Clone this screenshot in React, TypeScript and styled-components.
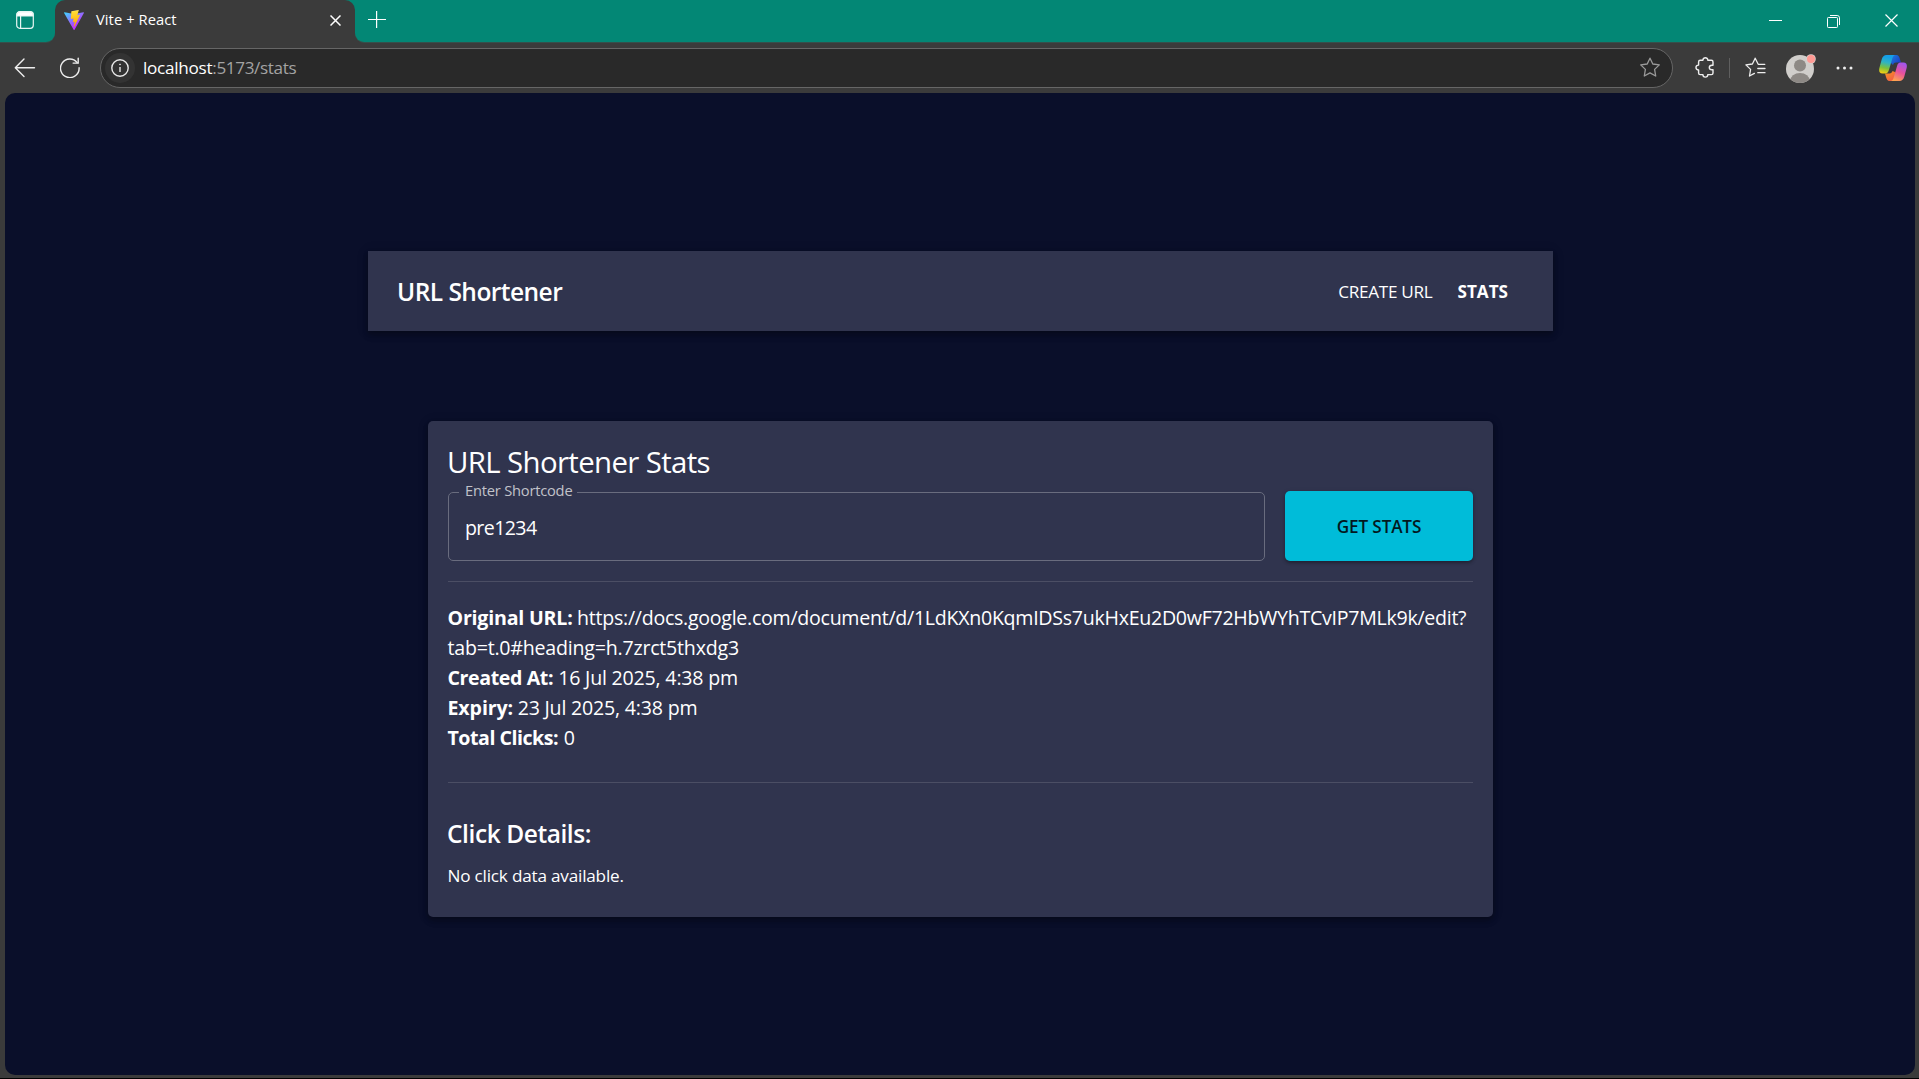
import React from 'react';
import styled, { createGlobalStyle } from 'styled-components';

const GlobalStyle = createGlobalStyle`
  * { box-sizing: border-box; }
  html, body { margin: 0; padding: 0; background: #000; }
  body {
    font-family: "Open Sans", "Noto Sans", sans-serif;
    color: #fff;
    overflow: hidden;
  }
  svg { display: block; flex: none; }
`;

/* ---------- browser frame ---------- */

const Window = styled.div`
  width: 1919px;
  height: 1079px;
  display: flex;
  flex-direction: column;
  background: #3b3b3b;
  border-bottom: 1px solid #000;
`;

const TabStrip = styled.div`
  display: flex;
  height: 42px;
  flex: none;
`;

const WorkspaceArea = styled.div`
  width: 55px;
  background: #038775;
  border-bottom-right-radius: 9px;
  box-shadow: 0 1px 0 #35504b;
  padding: 11px 0 0 16px;
`;

const TabSlot = styled.div`
  width: 300px;
  background: #038775;
`;

const Tab = styled.div`
  height: 42px;
  display: flex;
  align-items: flex-start;
  background: #3b3b3b;
  border-radius: 10px 10px 0 0;
  padding: 10px 14px 0 9px;
`;

const TabTitle = styled.span`
  flex: 1;
  margin: -2px 0 0 12px;
  font-size: 14.7px;
  line-height: 22px;
  letter-spacing: 0.08px;
`;

const CloseTab = styled.span`
  padding-top: 5px;
`;

const StripRest = styled.div`
  flex: 1;
  display: flex;
  justify-content: space-between;
  background: #038775;
  border-bottom-left-radius: 9px;
  box-shadow: 0 1px 0 #35504b;
  padding: 0 21px 0 13px;
`;

const NewTab = styled.span`
  padding-top: 11px;
`;

const WindowControls = styled.div`
  display: flex;
  gap: 45px;
  padding-top: 14px;
`;

const Toolbar = styled.div`
  height: 51px;
  flex: none;
  display: flex;
  align-items: center;
  padding: 1px 11px 1px 14px;
`;

const IconSlot = styled.span<{ $w: number; $end?: boolean }>`
  width: ${(p) => p.$w}px;
  display: flex;
  flex: none;
  align-items: center;
  justify-content: ${(p) => (p.$end ? 'flex-end' : 'flex-start')};
`;

const AddressBar = styled.div`
  width: 1573px;
  height: 40px;
  flex: none;
  display: flex;
  align-items: center;
  padding: 0 11px 0 4px;
  background: #292929;
  border: 1px solid #666;
  border-radius: 20px;
`;

const SiteInfo = styled.span`
  width: 30px;
  height: 30px;
  display: flex;
  align-items: center;
  justify-content: center;
  border-radius: 50%;
  background: #333;
`;

const Address = styled.span`
  flex: 1;
  margin-left: 8px;
  font-size: 17.15px;
  line-height: 24px;
  letter-spacing: -0.28px;
`;

const AddressPath = styled.span`
  color: #a3a3a3;
  letter-spacing: -0.38px;
`;

const ToolbarDivider = styled.span`
  width: 1px;
  height: 20px;
  margin: 0 15px 0 14px;
  background: #5f5f5f;
`;

/* ---------- page ---------- */

const Viewport = styled.main`
  height: 982px;
  margin: 0 4px 0 5px;
  display: flex;
  flex-direction: column;
  align-items: center;
  background: #0a0f2a;
  border-radius: 10px;
  padding: 158px 0 0 1px;
`;

const NavBar = styled.header`
  width: 1185px;
  height: 80px;
  display: flex;
  align-items: center;
  justify-content: space-between;
  padding: 2px 45px 0 29px;
  background: #30344e;
  box-shadow: 0 2px 5px rgba(0, 0, 0, 0.2), 0 5px 6px rgba(0, 0, 0, 0.14), 0 1px 12px rgba(0, 0, 0, 0.12);
`;

const Brand = styled.span`
  font-size: 24.5px;
  line-height: 40px;
  font-weight: 600;
  letter-spacing: -0.53px;
`;

const NavLinks = styled.nav`
  display: flex;
  gap: 25px;
`;

const NavLink = styled.span<{ $active?: boolean }>`
  font-size: 17.15px;
  line-height: 30px;
  font-weight: ${(p) => (p.$active ? 700 : 400)};
  letter-spacing: ${(p) => (p.$active ? 0 : -0.3)}px;
`;

const Card = styled.section`
  width: 1065px;
  height: 496px;
  margin-top: 90px;
  padding: 20px;
  background: #30344e;
  border-radius: 5px;
  box-shadow: 0 2px 5px rgba(0, 0, 0, 0.2), 0 5px 6px rgba(0, 0, 0, 0.14), 0 1px 12px rgba(0, 0, 0, 0.12);
`;

const CardTitle = styled.h1`
  margin: 0 0 9px -1px;
  padding-top: 1px;
  font-size: 29.4px;
  line-height: 40px;
  font-weight: 400;
  letter-spacing: -0.63px;
`;

const FormRow = styled.div`
  display: flex;
  gap: 20px;
  height: 70px;
`;

const Field = styled.fieldset`
  flex: 1;
  min-width: 0;
  margin: -11px 0 0;
  padding: 0 16px;
  border: 1px solid #696c7e;
  border-radius: 5px;
`;

const FieldLabel = styled.legend`
  margin-left: -6px;
  padding: 0 5px 4px 6px;
  font-size: 14.7px;
  line-height: 20px;
  letter-spacing: -0.22px;
  color: #c1c2c9;
`;

const FieldValue = styled.div`
  padding-top: 9px;
  font-size: 19.6px;
  line-height: 30px;
  letter-spacing: -0.62px;
`;

const SubmitButton = styled.button`
  width: 188px;
  height: 70px;
  padding: 1px 0 0;
  border: 0;
  border-radius: 5px;
  background: #00bcd9;
  color: #03191f;
  font: 600 17.15px/30px "Open Sans", "Noto Sans", sans-serif;
  letter-spacing: -0.15px;
  box-shadow: 0 2px 3px rgba(0, 0, 0, 0.25), 0 1px 5px rgba(0, 0, 0, 0.14);
`;

const Rule = styled.hr`
  height: 1px;
  margin: 20px 0 0;
  border: 0;
  background: #4b4e64;
`;

const Details = styled.div`
  margin-left: -0.5px;
  padding: 21px 0 9px;
  font-size: 19.6px;
  line-height: 30px;
`;

const DetailLine = styled.div<{ $ls: number }>`
  letter-spacing: ${(p) => p.$ls}px;
  white-space: nowrap;
`;

const DetailLabel = styled.strong<{ $ls: number; $gap: number }>`
  letter-spacing: ${(p) => p.$ls}px;
  margin-right: ${(p) => p.$gap}px;
`;

const ClickHeading = styled.h2`
  margin: 31px 0 0 -1px;
  font-size: 24.5px;
  line-height: 40px;
  font-weight: 600;
  letter-spacing: -0.43px;
`;

const EmptyNote = styled.p`
  margin: 9px 0 0 -0.5px;
  font-size: 17.15px;
  line-height: 25px;
  letter-spacing: -0.2px;
`;

/* ---------- icons ---------- */

const WorkspaceIcon = () => (
  <svg width="18" height="18" viewBox="0 0 18 18" fill="none" stroke="#e6f5f2" strokeWidth="1.2">
    <rect x="0.7" y="0.7" width="16.6" height="16.6" rx="3" />
    <path d="M1 5V3.4C1 2 2 1 3.400 1h11.200C16 1 17 2 17 3.400V5z" fill="#fff" />
    <path d="M4.600 5v12" />
  </svg>
);

const ViteIcon = () => (
  <svg width="20" height="20" viewBox="0 0 256 257">
    <defs>
      <linearGradient id="viteBody" x1="-.828%" x2="57.636%" y1="7.652%" y2="78.411%">
        <stop offset="0%" stopColor="#41D1FF" />
        <stop offset="100%" stopColor="#BD34FE" />
      </linearGradient>
      <linearGradient id="viteBolt" x1="43.376%" x2="50.316%" y1="2.242%" y2="89.03%">
        <stop offset="0%" stopColor="#FFEA83" />
        <stop offset="8.333%" stopColor="#FFDD35" />
        <stop offset="100%" stopColor="#FFA800" />
      </linearGradient>
    </defs>
    <path fill="url(#viteBody)" d="M255.153 37.938L134.897 252.976c-2.483 4.440-8.862 4.466-11.382.048L.875 37.958c-2.746-4.814 1.371-10.646 6.827-9.670l120.385 21.517a6.537 6.537 0 0 0 2.322-.004l117.867-21.483c5.438-.991 9.574 4.796 6.877 9.620Z" />
    <path fill="url(#viteBolt)" d="M185.432.063L96.440 17.501a3.268 3.268 0 0 0-2.634 3.014l-5.474 92.456a3.268 3.268 0 0 0 3.997 3.378l24.777-5.718c2.318-.535 4.413 1.507 3.936 3.838l-7.361 36.047c-.495 2.426 1.782 4.500 4.151 3.780l15.304-4.649c2.372-.720 4.652 1.360 4.150 3.788l-11.698 56.621c-.732 3.542 3.979 5.473 5.943 2.437l1.313-2.028l72.516-144.720c1.215-2.423-.880-5.186-3.540-4.672l-25.505 4.922c-2.396.462-4.435-1.770-3.759-4.114l16.646-57.705c.677-2.350-1.370-4.583-3.769-4.113Z" />
  </svg>
);

const CrossIcon = ({ size, weight = 1.3 }: { size: number; weight?: number }) => (
  <svg width={size} height={size} viewBox={`0 0 ${size} ${size}`} stroke="#fff" strokeWidth={weight}>
    <path d={`M.5 .5L${size - 0.5} ${size - 0.5}M${size - 0.5} .5L.5 ${size - 0.5}`} />
  </svg>
);

const PlusIcon = () => (
  <svg width="18" height="18" viewBox="0 0 18 18" stroke="#fff" strokeWidth="1.200">
    <path d="M0 8.500h18M8.600 0v17" />
  </svg>
);

const MinimizeIcon = () => (
  <svg width="13" height="13" viewBox="0 0 13 13" stroke="#fff">
    <path d="M0 6.500h13" />
  </svg>
);

const RestoreIcon = () => (
  <svg width="13" height="14" viewBox="0 0 13 14" fill="none" stroke="#fff">
    <rect x="0.500" y="3.500" width="10" height="10" rx="0.800" />
    <path d="M3 1.500H10.200Q12.500 1.500 12.500 3.800V11" />
  </svg>
);

const BackIcon = () => (
  <svg width="22" height="20" viewBox="0 0 22 20" fill="none" stroke="#eee" strokeWidth="1.400" strokeLinecap="round" strokeLinejoin="round">
    <path d="M20.500 9.800H1.500M10 1L1.300 9.800L10 18.600" />
  </svg>
);

const ReloadIcon = () => (
  <svg width="21" height="21" viewBox="0 0 21 21" fill="none" stroke="#eee" strokeWidth="1.400" strokeLinecap="round">
    <path d="M17.200 5.600A9.300 9.300 0 1 0 19.100 10.700" />
    <path d="M18.200 1.200V6.100H13.100" />
  </svg>
);

const InfoIcon = () => (
  <svg width="18" height="18" viewBox="0 0 18 18" fill="none" stroke="#e8e8e8" strokeWidth="1.400">
    <circle cx="9" cy="9" r="8.200" />
    <path d="M9 8v5" />
    <circle cx="9" cy="5.400" r="0.500" fill="#e8e8e8" strokeWidth="0.800" />
  </svg>
);

const StarIcon = () => (
  <svg width="21" height="21" viewBox="0 0 21 21" fill="none" stroke="#9a9a9a" strokeWidth="1.300" strokeLinejoin="round">
    <path d="M10 1.200L12.800 7L19.300 7.900L14.600 12.400L15.700 19L10 15.900L4.300 19L5.400 12.400L.7 7.900L7.200 7Z" />
  </svg>
);

const PuzzleIcon = () => (
  <svg width="20" height="21" viewBox="0 0 20 21" fill="none" stroke="#eee" strokeWidth="1.400" strokeLinejoin="round">
    <path d="M5.200 3.300H7.900C7.900 -.1 12.800 -.1 12.800 3.300H16.400Q18 3.300 18 4.900V8.200H17C13.400 8.200 13.400 12.800 17 12.800H18V16Q18 17.600 16.400 17.600H12.800C12.800 21 7.900 21 7.900 17.600H5.200Q3.600 17.600 3.600 16V12.900C.1 12.900 .1 8.100 3.600 8.100V4.900Q3.600 3.300 5.200 3.300Z" />
  </svg>
);

const FavoritesIcon = () => (
  <svg width="21" height="21" viewBox="0 0 21 21" fill="none" stroke="#eee" strokeWidth="1.300" strokeLinejoin="round" strokeLinecap="round">
    <path d="M19.800 7.300H13.200L10.200 1.200L7.400 7L.9 7.900L5.600 12.400L4.500 19L9.400 16.400" />
    <path d="M12.800 11.500H20M12.800 15.700H20" />
  </svg>
);

const AvatarIcon = () => (
  <svg width="30" height="32" viewBox="0 0 30 32">
    <defs>
      <clipPath id="avatarClip"><circle cx="14" cy="17" r="14" /></clipPath>
    </defs>
    <circle cx="14" cy="17" r="14" fill="#d0cecb" />
    <g clipPath="url(#avatarClip)" fill="#8d8985">
      <circle cx="14" cy="13.500" r="6" />
      <ellipse cx="14" cy="29" rx="9.800" ry="8" />
    </g>
    <circle cx="25" cy="7" r="4.800" fill="#d9d0cd" />
    <circle cx="25" cy="7" r="4" fill="#ff9a94" />
  </svg>
);

const MoreIcon = () => (
  <svg width="17" height="4" viewBox="0 0 17 4" fill="#eee">
    <circle cx="2" cy="2" r="1.500" />
    <circle cx="8.500" cy="2" r="1.500" />
    <circle cx="15" cy="2" r="1.500" />
  </svg>
);

const CopilotIcon = () => (
  <svg width="28" height="26" viewBox="0 0 28 26">
    <defs>
      <linearGradient id="cpLeft" x1="0.500" y1="0" x2="0.300" y2="1">
        <stop offset="0.100" stopColor="#159fe8" />
        <stop offset="0.400" stopColor="#2fb3c4" />
        <stop offset="0.700" stopColor="#7cc13c" />
        <stop offset="1" stopColor="#f4cf12" />
      </linearGradient>
      <linearGradient id="cpRight" x1="0.700" y1="0" x2="0.300" y2="1">
        <stop offset="0" stopColor="#a155ee" />
        <stop offset="0.500" stopColor="#e8519c" />
        <stop offset="1" stopColor="#ffa64d" />
      </linearGradient>
      <linearGradient id="cpTop" x1="0" y1="0" x2="1" y2="0.600">
        <stop offset="0" stopColor="#1c8fe8" />
        <stop offset="1" stopColor="#1d3fc4" />
      </linearGradient>
      <linearGradient id="cpBottom" x1="0" y1="0" x2="1" y2="1">
        <stop offset="0" stopColor="#f79a1e" />
        <stop offset="1" stopColor="#ee4a52" />
      </linearGradient>
    </defs>
    <path fill="url(#cpTop)" d="M8 0H17.200C19.600 0 20.300 1.800 20.900 3.900L22 7.500H17C15.400 7.500 14.500 8.300 14 10L12 8Z" />
    <path fill="url(#cpBottom)" d="M20 26H10.600C8.300 26 7.700 24.200 7 22L6 18.500H10.500C12.200 18.500 13 17.600 13.500 16L16 17Z" />
    <path fill="url(#cpLeft)" d="M7.600 0H16.500C14.800 0 13.900 1.600 13.300 3.600L10 14.800C9.300 17.200 8.500 18.500 6.200 18.500H3.500C.3 18.500 -.4 15.800 .5 12.600L2.700 4.500C3.500 1.700 5 0 7.600 0Z" />
    <path fill="url(#cpRight)" d="M20.400 26H11.600C13.200 26 14.100 24.400 14.700 22.400L18 11.200C18.700 8.800 19.500 7.500 21.800 7.500H24.500C27.700 7.500 28.400 10.200 27.500 13.400L25.300 21.500C24.500 24.300 23 26 20.400 26Z" />
  </svg>
);

/* ---------- data ---------- */

type Detail = { label: string; value: string; labelLs: number; valueLs: number; gap: number };

const details: Detail[] = [
  { label: 'Created At:', value: '16 Jul 2025, 4:38 pm', labelLs: -0.39, valueLs: -0.2, gap: 5 },
  { label: 'Expiry:', value: '23 Jul 2025, 4:38 pm', labelLs: -0.1, valueLs: -0.2, gap: 4.5 },
  { label: 'Total Clicks:', value: '0', labelLs: -0.48, valueLs: 0, gap: 5.5 },
];

export default function App() {
  return (
    <>
      <GlobalStyle />
      <Window>
        <TabStrip>
          <WorkspaceArea><WorkspaceIcon /></WorkspaceArea>
          <TabSlot>
            <Tab>
              <ViteIcon />
              <TabTitle>Vite + React</TabTitle>
              <CloseTab><CrossIcon size={11} weight={1.5} /></CloseTab>
            </Tab>
          </TabSlot>
          <StripRest>
            <NewTab><PlusIcon /></NewTab>
            <WindowControls>
              <MinimizeIcon />
              <RestoreIcon />
              <CrossIcon size={13} weight={1.2} />
            </WindowControls>
          </StripRest>
        </TabStrip>
        <Toolbar>
          <IconSlot $w={46}><BackIcon /></IconSlot>
          <IconSlot $w={40}><ReloadIcon /></IconSlot>
          <AddressBar>
            <SiteInfo><InfoIcon /></SiteInfo>
            <Address>localhost<AddressPath>:5173/stats</AddressPath></Address>
            <StarIcon />
          </AddressBar>
          <IconSlot $w={41.5} $end><PuzzleIcon /></IconSlot>
          <ToolbarDivider />
          <IconSlot $w={41}><FavoritesIcon /></IconSlot>
          <IconSlot $w={50}><AvatarIcon /></IconSlot>
          <IconSlot $w={43}><MoreIcon /></IconSlot>
          <CopilotIcon />
        </Toolbar>
        <Viewport>
          <NavBar>
            <Brand>URL Shortener</Brand>
            <NavLinks>
              <NavLink>CREATE URL</NavLink>
              <NavLink $active>STATS</NavLink>
            </NavLinks>
          </NavBar>
          <Card>
            <CardTitle>URL Shortener Stats</CardTitle>
            <FormRow>
              <Field>
                <FieldLabel>Enter Shortcode</FieldLabel>
                <FieldValue>pre1234</FieldValue>
              </Field>
              <SubmitButton>GET STATS</SubmitButton>
            </FormRow>
            <Rule />
            <Details>
              <DetailLine $ls={-0.28}>
                <DetailLabel $ls={-0.2} $gap={4.5}>Original URL:</DetailLabel>
                https://docs.google.com/document/d/1LdKXn0KqmIDSs7ukHxEu2D0wF72HbWYhTCvIP7MLk9k/edit?
              </DetailLine>
              <DetailLine $ls={-0.22}>tab=t.0#heading=h.7zrct5thxdg3</DetailLine>
              {details.map((d) => (
                <DetailLine key={d.label} $ls={d.valueLs}>
                  <DetailLabel $ls={d.labelLs} $gap={d.gap}>{d.label}</DetailLabel>
                  {d.value}
                </DetailLine>
              ))}
            </Details>
            <Rule />
            <ClickHeading>Click Details:</ClickHeading>
            <EmptyNote>No click data available.</EmptyNote>
          </Card>
        </Viewport>
      </Window>
    </>
  );
}
